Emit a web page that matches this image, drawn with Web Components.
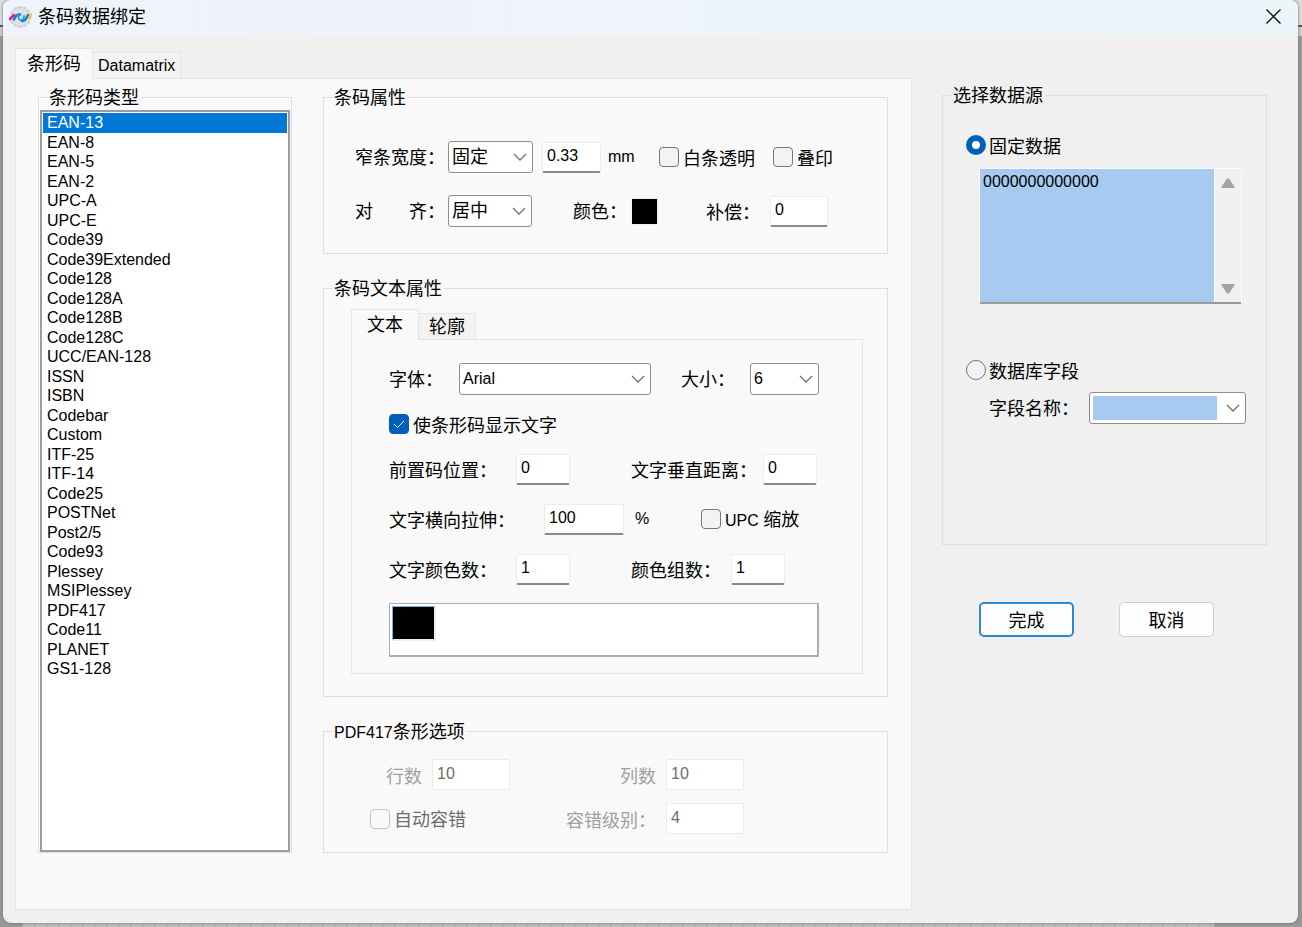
<!DOCTYPE html>
<html lang="zh-CN">
<head>
<meta charset="utf-8">
<title>条码数据绑定</title>
<style>
  html, body {
    margin: 0;
    min-height: 100%;
  }
  body {
    box-sizing: border-box;
    min-height: 100vh;
    display: flex;
    flex-direction: column;
    font: 18px/24px "Liberation Sans", "Noto Sans CJK SC", sans-serif;
    color: #000;
    /* dimmed canvas of the editor behind the dialog */
    background:
      repeating-linear-gradient(90deg, #a8a8a8 0 1px, transparent 1px 12px) 22px 100% / calc(100% - 110px) 5px no-repeat,
      linear-gradient(#bdbdbd, #bdbdbd) 22px 100% / calc(100% - 110px) 5px no-repeat,
      linear-gradient(#dcdcdc 0 25px, #555 25px 27px, #cfcfcf 27px 36px, #999 36px);
  }
</style>
</head>
<body>
<barcode-dialog></barcode-dialog>

<script>
// shared by every element with controls inside
const controlStyles = `
  * { box-sizing: border-box; }
  input, select, textarea, button { font: inherit; color: inherit; margin: 0; }
  label { white-space: nowrap; }
`;

class BaseElement extends HTMLElement {
  constructor() {
    super();
    this.attachShadow({ mode: 'open' });
  }

  connectedCallback() {
    this.shadowRoot.innerHTML = `<style>${controlStyles}</style>` + this.render();
  }

  attr(name, fallback = '') {
    return this.getAttribute(name) || fallback;
  }
}

// title-bar.js
class TitleBar extends BaseElement {
  render() {
    return `
      <style>
        :host {
          display: flex;
          align-items: center;
          gap: 6px;
          height: 36px;
          padding: 0 16px 3px 6px;
          box-sizing: border-box;
          background: linear-gradient(90deg, #eff3fb, #ebf4f8);
        }
        h1 { flex: 1; margin: 0; padding-top: 1px; font: inherit; }
        button { display: flex; padding: 0; border: 0; background: none; }
      </style>
      <svg width="23" height="24" viewBox="0 0 23 24" fill="none" stroke-linecap="round">
        <circle cx="11.500" cy="12" r="10" fill="#e1e1e1"/>
        <circle cx="11.500" cy="12" r="10" stroke="#d0d0d0" stroke-width="2" stroke-dasharray="2 3"/>
        <path d="M1 14l4-4" stroke="#e0218a" stroke-width="2.500"/>
        <path d="M5 14.500c1-3 3-5 6-5" stroke="#2a6fd0" stroke-width="2.500"/>
        <path d="M9 10c2 1-1 4 2 5s4-2 4-4" stroke="#18a5e8" stroke-width="1.800"/>
        <path d="M13 16c4 0 4-3 6-6" stroke="#1785dc" stroke-width="2.500"/>
        <path d="M20 13l2-4" stroke="#f5c518" stroke-width="2"/>
      </svg>
      <h1><slot></slot></h1>
      <button type="button" aria-label="关闭">
        <svg width="17" height="17" viewBox="0 0 17 17" stroke="#111" stroke-width="1.4"><path d="M1.500 1.500l14 14m0-14l-14 14"/></svg>
      </button>
    `;
  }
}
customElements.define('title-bar', TitleBar);

// tab-view.js
class TabView extends BaseElement {
  render() {
    const tabs = this.attr('tabs').split(',');
    return `
      <style>
        :host { display: flex; flex-direction: column; }
        nav { display: flex; align-items: flex-end; height: 31px; margin-bottom: -1px; z-index: 1; }
        button {
          height: 27px;
          padding: 1px var(--tab-padding, 6px) 0;
          border: 1px solid #e5e5e5;
          border-left: 0;
          background: #f3f3f3;
          line-height: 24px;
        }
        button[aria-selected="true"] {
          height: 31px;
          padding: 0 var(--active-tab-padding, 11px);
          border-left: 1px solid #e5e5e5;
          border-bottom: 0;
          background: #f9f9f9;
        }
        .latin { font-size: 16px; }
        section { flex: 1; border: 1px solid #e5e5e5; background: #f9f9f9; padding: var(--pane-padding, 0); }
      </style>
      <nav role="tablist">
        ${tabs.map((t, i) => `<button type="button" role="tab" class="${/^\w+$/.test(t) ? 'latin' : ''}" aria-selected="${i === 0}">${t}</button>`).join('')}
      </nav>
      <section role="tabpanel"><slot></slot></section>
    `;
  }
}
customElements.define('tab-view', TabView);

// group-box.js
class GroupBox extends BaseElement {
  render() {
    return `
      <style>
        :host { display: flex; flex-direction: column; }
        fieldset {
          flex: 1;
          display: flex;
          flex-direction: column;
          min-width: 0;
          margin: 0;
          padding: 0;
          border: 1px solid #dedede;
        }
        legend { margin-left: 8px; padding: 2px 2px 0; line-height: 24px; }
        div { flex: 1; display: flex; flex-direction: column; padding: var(--box-padding, 0); }
        span { font-size: 16px; }
      </style>
      <fieldset>
        <legend>${this.attr('label').replace(/[A-Z0-9]+/, '<span>$&</span>')}</legend>
        <div><slot></slot></div>
      </fieldset>
    `;
  }
}
customElements.define('group-box', GroupBox);

// list-box.js
class ListBox extends BaseElement {
  render() {
    const items = this.attr('items').split(' ');
    return `
      <style>
        :host { display: flex; flex: 1; }
        select {
          flex: 1;
          min-width: 0;
          padding: 1px;
          border: 2px solid #989ea6;
          border-radius: 0;
          outline: 0;
          background: #fff;
          font-size: 16px;
          overflow: hidden;
        }
        option { height: 20px; min-height: 0; padding: 1px 4px 0; line-height: 20px; }
        option:nth-child(even) { height: 19px; line-height: 19px; }
        option:checked { background: linear-gradient(#0078d7, #0078d7); -webkit-text-fill-color: #fff; }
      </style>
      <select size="${items.length}" aria-label="${this.attr('label')}">
        ${items.map((t, i) => `<option${i === 0 ? ' selected' : ''}>${t}</option>`).join('')}
      </select>
    `;
  }
}
customElements.define('list-box', ListBox);

// text-field.js
class TextField extends BaseElement {
  render() {
    const disabled = this.hasAttribute('disabled');
    return `
      <style>
        :host { display: flex; align-items: center; }
        label { width: ${this.attr('label-width', 'auto')}; color: ${disabled ? '#a0a0a0' : 'inherit'}; padding-top: 4px; }
        input {
          width: ${this.attr('width', '54px')};
          height: 31px;
          padding: 0 4px 1px;
          border: 1px solid #ebebeb;
          border-bottom: 2px solid #8a8a8a;
          border-radius: 2px;
          background: #fff;
          font-size: 16px;
        }
        input:disabled { color: #6d6d6d; border-bottom: 1px solid #ebebeb; }
        span { margin-left: ${this.attr('unit-gap', '7px')}; font-size: 16px; }
      </style>
      ${this.hasAttribute('label') ? `<label for="field">${this.attr('label')}</label>` : ''}
      <input id="field" type="text" value="${this.attr('value')}" ${disabled ? 'disabled' : ''} ${this.hasAttribute('name') ? `aria-label="${this.attr('name')}"` : ''}>
      ${this.hasAttribute('unit') ? `<span>${this.attr('unit')}</span>` : ''}
    `;
  }
}
customElements.define('text-field', TextField);

// combo-box.js
class ComboBox extends BaseElement {
  render() {
    return `
      <style>
        :host { display: flex; align-items: center; }
        label { width: ${this.attr('label-width', 'auto')}; white-space: pre; padding-top: 2px; }
        div { display: grid; align-items: center; width: ${this.attr('width')}; }
        select, svg { grid-area: 1 / 1; }
        select {
          appearance: none;
          width: 100%;
          height: 32px;
          padding: 3px 28px 3px 3px;
          border: 1px solid #8e8e8e;
          border-radius: 3px;
          background: #fff;
        }
        .latin { font-size: 16px; padding-bottom: 5px; }
        .marked { background: linear-gradient(#a6caf0, #a6caf0) content-box, #fff; }
        svg { justify-self: end; margin-right: 6px; pointer-events: none; }
      </style>
      <label for="combo">${this.attr('label')}</label>
      <div>
        <select id="combo" class="${/^\w+$/.test(this.attr('value')) ? 'latin' : ''} ${this.hasAttribute('marked') ? 'marked' : ''}">
          <option>${this.attr('value')}</option>
        </select>
        <svg width="14" height="8" viewBox="0 0 14 8" fill="none" stroke="#707070" stroke-width="1.300"><path d="M1 1l6 6 6-6"/></svg>
      </div>
    `;
  }
}
customElements.define('combo-box', ComboBox);

// check-box.js
class CheckBox extends BaseElement {
  render() {
    return `
      <style>
        :host { display: flex; align-items: center; }
        label { display: flex; align-items: center; gap: 4px; }
        b { display: grid; }
        input, svg { grid-area: 1 / 1; }
        input {
          appearance: none;
          width: 20px;
          height: 20px;
          border: 1px solid #767676;
          border-radius: 4px;
          background: #f3f3f3;
        }
        input:checked { border-color: #005fb8; background: #005fb8; }
        input:disabled { border-color: #c3c3c3; background: #fafafa; }
        svg { place-self: center; pointer-events: none; }
        span { padding-top: 3px; }
        i { font-size: 16px; font-style: normal; }
        .off { color: #6d6d6d; }
      </style>
      <label>
        <b>
          <input type="checkbox" ${this.hasAttribute('checked') ? 'checked' : ''} ${this.hasAttribute('disabled') ? 'disabled' : ''}>
          ${this.hasAttribute('checked') ? '<svg width="12" height="9" viewBox="0 0 12 9" fill="none" stroke="#fff"><path d="M1 4l3.500 3.500L11 1"/></svg>' : ''}
        </b>
        <span class="${this.hasAttribute('disabled') ? 'off' : ''}">${this.attr('label').replace(/[A-Z]+ ?/, '<i>$&</i>')}</span>
      </label>
    `;
  }
}
customElements.define('check-box', CheckBox);

// radio-button.js
class RadioButton extends BaseElement {
  render() {
    return `
      <style>
        :host { display: flex; height: 24px; }
        label { display: flex; align-items: center; gap: 3px; }
        input {
          appearance: none;
          width: 20px;
          height: 20px;
          border: 1px solid #767676;
          border-radius: 50%;
          background: #f3f3f3;
        }
        input:checked { border: 6px solid #005fb8; background: #fff; }
        span { padding-top: 3px; }
      </style>
      <label><input type="radio" ${this.hasAttribute('checked') ? 'checked' : ''}><span><slot></slot></span></label>
    `;
  }
}
customElements.define('radio-button', RadioButton);

// memo-field.js
class MemoField extends BaseElement {
  render() {
    return `
      <style>
        :host {
          display: flex;
          height: 136px;
          box-sizing: border-box;
          border: 1px solid #fafafa;
          border-bottom: 2px solid #9b9b9b;
          border-radius: 2px;
        }
        textarea {
          flex: 1;
          min-width: 0;
          padding: 1px 3px;
          border: 0;
          outline: 0;
          resize: none;
          overflow: hidden;
          background: #a6caf0;
          font-size: 16px;
        }
        div {
          display: flex;
          flex-direction: column;
          justify-content: space-between;
          align-items: center;
          width: 27px;
          padding: 9px 0 8px;
          border-left: 1px solid #fafafa;
          background: #f0f0f0;
        }
      </style>
      <textarea aria-label="${this.attr('label')}">${this.attr('value')}</textarea>
      <div>
        <svg width="14" height="10" viewBox="0 0 14 10" fill="#a3a3a3"><path d="M6 .5h2L13.500 9v1H.5V9z"/></svg>
        <svg width="14" height="10" viewBox="0 0 14 10" fill="#a3a3a3"><path d="M6 9.500h2L13.500 1V0H.5v1z"/></svg>
      </div>
    `;
  }
}
customElements.define('memo-field', MemoField);

// color-field.js
class ColorField extends BaseElement {
  render() {
    return `
      <style>
        :host { display: flex; align-items: center; }
        label { width: 58px; padding-top: 2px; }
        button { width: 27px; height: 27px; padding: 0; border: 1px solid #f0f0f0; background: #000; }
      </style>
      <label for="color">${this.attr('label')}</label>
      <button id="color" type="button"></button>
    `;
  }
}
customElements.define('color-field', ColorField);

// color-strip.js
class ColorStrip extends BaseElement {
  render() {
    return `
      <style>
        :host { display: flex; box-sizing: border-box; height: 54px; padding: 2px; border: 2px solid #abadb3; border-width: 1px 2px 2px 1px; background: #fff; }
        button { width: 44px; height: 35px; padding: 0; border: 1px solid #78b4e6; border-right: 2px solid #eee; border-bottom: 2px solid #eee; background: #000; }
      </style>
      <button type="button" aria-label="颜色 1"></button>
    `;
  }
}
customElements.define('color-strip', ColorStrip);

// push-button.js
class PushButton extends BaseElement {
  render() {
    return `
      <style>
        :host { display: block; }
        button {
          width: 95px;
          height: 35px;
          padding: 2px 0 0;
          border: 1px solid #d0d0d0;
          border-radius: 5px;
          background: #fdfdfd;
        }
        :host([default]) button { border: 2px solid #2a8ad8; }
      </style>
      <button type="button"><slot></slot></button>
    `;
  }
}
customElements.define('push-button', PushButton);

// barcode-dialog.js
const barcodeTypes = [
  'EAN-13', 'EAN-8', 'EAN-5', 'EAN-2', 'UPC-A', 'UPC-E',
  'Code39', 'Code39Extended', 'Code128', 'Code128A', 'Code128B', 'Code128C',
  'UCC/EAN-128', 'ISSN', 'ISBN', 'Codebar', 'Custom', 'ITF-25', 'ITF-14',
  'Code25', 'POSTNet', 'Post2/5', 'Code93', 'Plessey', 'MSIPlessey',
  'PDF417', 'Code11', 'PLANET', 'GS1-128'
];

class BarcodeDialog extends BaseElement {
  render() {
    return `
      <style>
        :host {
          flex: 1;
          display: flex;
          flex-direction: column;
          margin: 0 4px 5px 3px;
          border-radius: 8px;
          overflow: hidden;
          background: #f0f0f0;
          box-shadow: 0 0 3px #666;
        }
        main { flex: 1; display: flex; gap: 30px; padding: 12px 31px 13px 12px; }
        .types { flex: 1; min-width: 0; --tab-padding: 5px; --pane-padding: 5px 24px 56px 22px; }
        .columns { display: grid; grid-template-columns: 254px 1fr; gap: 31px; height: 100%; }
        .stack { display: flex; flex-direction: column; gap: 21px; }
        .list { --box-padding: 0 1px; }
        .row { display: grid; align-items: center; min-height: 32px; }

        .props { --box-padding: 31px 20px 26px 31px; }
        .props .row + .row { margin-top: 22px; }
        .width-row { grid-template-columns: 187px 117px 114px auto; }
        .align-row { grid-template-columns: 218px 133px auto; }

        .text { --box-padding: 8px 24px 22px 27px; }
        .text tab-view { --tab-padding: 10px; --active-tab-padding: 15px; --pane-padding: 23px 43px 16px 37px; }
        .form { display: flex; flex-direction: column; gap: 18px; }
        .font-row { grid-template-columns: 292px auto; }
        .half-row { grid-template-columns: 242px auto; }
        .stretch-row { grid-template-columns: 312px auto; }
        .form check-box { height: 22px; }

        .pdf { --box-padding: 14px 20px 18px 46px; }
        .pdf-grid { display: grid; grid-template-columns: 140px 178px; gap: 13px 56px; }
        .pdf-grid text-field { justify-self: end; }

        aside { width: 325px; padding-top: 34px; }
        .source { --box-padding: 25px 20px 120px 23px; }
        memo-field { margin: 11px 4px 54px 13px; }
        .source combo-box { margin: 10px 0 0 23px; }
        .actions { display: flex; gap: 45px; margin: 57px 0 0 37px; }
      </style>
      <title-bar>条码数据绑定</title-bar>
      <main>
        <tab-view class="types" tabs="条形码,Datamatrix">
          <div class="columns">
            <group-box class="list" label="条形码类型">
              <list-box label="条形码类型" items="${barcodeTypes.join(' ')}"></list-box>
            </group-box>
            <div class="stack">
              <group-box class="props" label="条码属性">
                <div class="row width-row">
                  <combo-box label="窄条宽度：" label-width="93px" width="85px" value="固定"></combo-box>
                  <text-field name="宽度" width="59px" value="0.33" unit="mm"></text-field>
                  <check-box label="白条透明"></check-box>
                  <check-box label="叠印"></check-box>
                </div>
                <div class="row align-row">
                  <combo-box label="对　　齐：" label-width="93px" width="84px" value="居中"></combo-box>
                  <color-field label="颜色："></color-field>
                  <text-field label="补偿：" label-width="64px" width="58px" value="0"></text-field>
                </div>
              </group-box>
              <group-box class="text" label="条码文本属性">
                <tab-view tabs="文本,轮廓">
                  <div class="form">
                    <div class="row font-row">
                      <combo-box label="字体：" label-width="70px" width="192px" value="Arial"></combo-box>
                      <combo-box label="大小：" label-width="69px" width="69px" value="6"></combo-box>
                    </div>
                    <check-box label="使条形码显示文字" checked></check-box>
                    <div class="row half-row">
                      <text-field label="前置码位置：" label-width="127px" value="0"></text-field>
                      <text-field label="文字垂直距离：" label-width="132px" value="0"></text-field>
                    </div>
                    <div class="row stretch-row">
                      <text-field label="文字横向拉伸：" label-width="155px" width="80px" value="100" unit="%" unit-gap="11px"></text-field>
                      <check-box label="UPC 缩放"></check-box>
                    </div>
                    <div class="row half-row">
                      <text-field label="文字颜色数：" label-width="127px" value="1"></text-field>
                      <text-field label="颜色组数：" label-width="100px" value="1"></text-field>
                    </div>
                    <color-strip></color-strip>
                  </div>
                </tab-view>
              </group-box>
              <group-box class="pdf" label="PDF417条形选项">
                <div class="pdf-grid">
                  <text-field label="行数" label-width="46px" width="78px" value="10" disabled></text-field>
                  <text-field label="列数" label-width="46px" width="78px" value="10" disabled></text-field>
                  <check-box label="自动容错" disabled></check-box>
                  <text-field label="容错级别：" label-width="100px" width="78px" value="4" disabled></text-field>
                </div>
              </group-box>
            </div>
          </div>
        </tab-view>
        <aside>
          <group-box class="source" label="选择数据源">
            <radio-button checked>固定数据</radio-button>
            <memo-field label="固定数据" value="0000000000000"></memo-field>
            <radio-button>数据库字段</radio-button>
            <combo-box label="字段名称：" label-width="100px" width="158px" marked></combo-box>
          </group-box>
          <div class="actions">
            <push-button default>完成</push-button>
            <push-button>取消</push-button>
          </div>
        </aside>
      </main>
    `;
  }
}
customElements.define('barcode-dialog', BarcodeDialog);
</script>
</body>
</html>
